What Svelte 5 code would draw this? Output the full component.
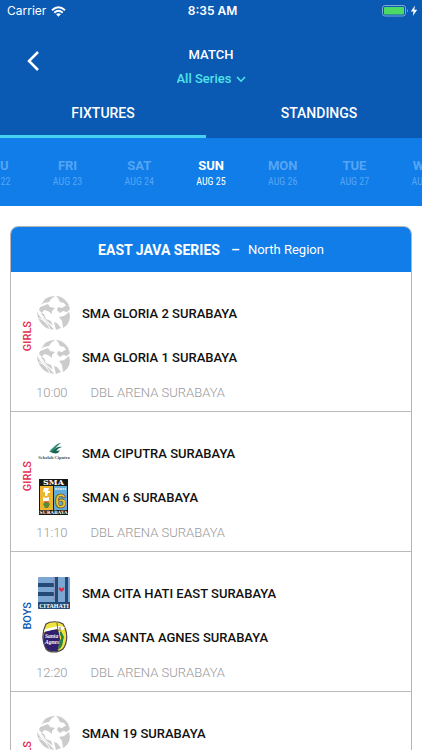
<script>
  const days = [
    { day: 'THU', date: 'AUG 22' },
    { day: 'FRI', date: 'AUG 23' },
    { day: 'SAT', date: 'AUG 24' },
    { day: 'SUN', date: 'AUG 25' },
    { day: 'MON', date: 'AUG 26' },
    { day: 'TUE', date: 'AUG 27' },
    { day: 'WED', date: 'AUG 28' }
  ];
  const matches = [
    { group: 'GIRLS', time: '10:00', venue: 'DBL ARENA SURABAYA', teams: [{ name: 'SMA GLORIA 2 SURABAYA', logo: 'ball' }, { name: 'SMA GLORIA 1 SURABAYA', logo: 'ball' }] },
    { group: 'GIRLS', time: '11:10', venue: 'DBL ARENA SURABAYA', teams: [{ name: 'SMA CIPUTRA SURABAYA', logo: 'ciputra' }, { name: 'SMAN 6 SURABAYA', logo: 'six' }] },
    { group: 'BOYS', time: '12:20', venue: 'DBL ARENA SURABAYA', teams: [{ name: 'SMA CITA HATI EAST SURABAYA', logo: 'citahati' }, { name: 'SMA SANTA AGNES SURABAYA', logo: 'agnes' }] },
    { group: 'GIRLS', time: '13:30', venue: 'DBL ARENA SURABAYA', teams: [{ name: 'SMAN 19 SURABAYA', logo: 'ball' }, { name: 'SMAN 2 SURABAYA', logo: 'ball' }] }
  ];
  let selected = $state('SUN');
  let tab = $state('FIXTURES');
</script>

{#snippet logo(kind)}
  <svg class="logo" viewBox="0 0 36 36" aria-hidden="true">
    {#if kind === 'ball'}
      <g fill="#cbccce">
        <path d="M9 4 C12 2 16 1 19 1 L15 4 L13 7 L8 8 L5 10 Z" />
        <path d="M20 1 C26 1 30 5 33 10 L31 12 L28 8 L24 7 L22 3 Z" />
        <path d="M7 11 L12 9 L14 12 L19 13 L16 16 L16 19 L12 16 L8 15 L6 18 L3 15 L4 12 Z" />
        <path d="M22 12 L26 13 L29 11 L33 11 L34 14 L31 17 L27 16 L24 18 L21 15 Z" />
        <path d="M1 16 C3 22 9 27 14 30 L18 34.500 C9 35 1 27 1 16 Z" />
        <path d="M5 18 L8 19 L10 24 L15 26 L17 31 C11 28 7 24 5 18 Z" />
        <path d="M33 17 C36 25 31 31 27 33 L26 26 L23 22 L28 21 Z" />
        <path d="M18 27 L21 28 L25 33 L20 35 Z" />
      </g>
      <path d="M3 23 C8 25 12 29 14 34 M6 20 C9 25 12 28 17 31" stroke="#fff" stroke-width="1" fill="none" />
    {:else if kind === 'ciputra'}
      <path d="M14 15 C18 13 20 8 25 8 C22 10 19 13 18 17 Z" fill="#2d8b78" />
      <path d="M17 16 C20 12 23 11 26 12 C23 13 21 14 20 17 Z M13 16 C17 15 20 17 24 15 L22 18 C19 19 16 18 13 16 Z" fill="#196552" />
      <text x="18" y="24" font-family="Liberation Serif, serif" font-weight="700" font-size="4.500" text-anchor="middle" fill="#456">Sekolah Ciputra</text>
    {:else if kind === 'six'}
      <rect x="3" y="0" width="29" height="36" fill="#151713" />
      <rect x="4" y="7" width="13" height="24" fill="#edb52d" />
      <rect x="18" y="7" width="13" height="24" fill="#62aad7" />
      <text x="17.500" y="6" font-family="DejaVu Serif, serif" font-weight="700" font-size="8" text-anchor="middle" fill="#fff">SMA</text>
      <text x="24.500" y="29" font-family="Liberation Sans, sans-serif" font-weight="700" font-size="21" text-anchor="middle" fill="#efc62c" stroke="#57431b" stroke-width=".6">6</text>
      <path d="M8 9 H13 L12 12 H14 V14 H12 L11 17 H9 V13 H7 Z M7 18 L10 19 L13 18 V22 H7 Z" fill="#fff" />
      <path d="M19 10 H30" stroke="#e8f1f6" stroke-width="1.500" stroke-dasharray="2 .5" />
      <path d="M7 25 C10 22 12 23 14 25 L12 29 H9 Z" fill="#598c3a" />
      <path d="M8 23 H13" stroke="#c4443b" />
      <text x="17.500" y="35" font-family="DejaVu Serif, serif" font-weight="700" font-size="4.500" text-anchor="middle" fill="#fff">SURABAYA</text>
    {:else if kind === 'citahati'}
      <rect x="2" y="2" width="32" height="32" rx="1" fill="#7ba7d2" />
      <path d="M2 8 H18 V12 H2 Z M2 17 H18 V21 H2 Z M2 27 H34 V33 Q34 34 33 34 H3 Q2 34 2 33 Z M19 2 H22 V27 H19 Z M29 2 H32 V27 H29 Z" fill="#244b75" />
      <path d="M18 2 V26" stroke="#b8637a" stroke-width=".8" stroke-dasharray="2 1" />
      <path d="M25.500 17 C20 13 24 11 25.500 14 C27 11 31 13 25.500 17 Z" fill="#d92d44" />
      <text x="18" y="33" font-family="Liberation Serif, serif" font-weight="700" font-size="6" text-anchor="middle" fill="#fff">CITAHATI</text>
    {:else}
      <path d="M10 5 C14 2 23 2 27 5 C32 13 32 23 27 30 C22 34 14 34 10 30 C6 22 6 13 10 5 Z" fill="#f0e43b" stroke="#4b4650" stroke-width="1.200" />
      <path d="M9 12 L22 10 L24 20 L22 32 C17 33 12 32 10 29 C7 23 7 17 9 12 Z" fill="#30206e" />
      <path d="M9 10 L22 7 L29 8 L27 11 L20 10 L8 13 Z" fill="#fff" />
      <path d="M21 4 L22 12 M24 8 V12" stroke="#514633" stroke-width=".8" />
      <path d="M25 12 C21 15 28 18 24 21 C22 24 24 28 21 31 C28 29 26 23 28 18 Z" fill="#28834b" />
      <g font-family="Liberation Serif, serif" font-style="italic" font-weight="700" font-size="5.500" fill="#fff">
        <text x="9" y="19">Santa</text>
        <text x="9" y="25">Agnes</text>
      </g>
    {/if}
  </svg>
{/snippet}

<div class="screen">
  <header>
    <div class="status">
      <span class="carrier">Carrier
        <svg width="15" height="11" viewBox="0 0 15 11" aria-hidden="true">
          <g fill="none" stroke="#fff" stroke-width="1.900"><path d="M1 4.200 Q7.500 -1.700 14 4.200" /><path d="M3.300 6.700 Q7.500 2.800 11.700 6.700" /></g>
          <path d="M5.100 8.300 Q7.500 6.200 9.900 8.300 L7.500 10.800 Z" fill="#fff" />
        </svg>
      </span>
      <span class="clock">8:35 AM</span>
      <span class="power">
        <svg width="36" height="12" viewBox="0 0 36 12" aria-hidden="true">
          <rect x=".5" y=".5" width="23" height="10.500" rx="2.500" fill="none" stroke="#7da7d8" />
          <rect x="2" y="2" width="20" height="7.500" rx="1" fill="#4cd964" />
          <path d="M25 4 Q27 5.700 25 7.500 Z" fill="#7da7d8" />
          <path d="M33 .5 L28.800 6.500 H31.500 L30.800 11 L35.200 4.800 H32.300 Z" fill="#fff" />
        </svg>
      </span>
    </div>
    <div class="titlebar">
      <button class="back" aria-label="Back">
        <svg width="14" height="22" viewBox="0 0 14 22" aria-hidden="true"><path d="M12 2 L3 11 L12 20" fill="none" stroke="#fff" stroke-width="2.500" /></svg>
      </button>
      <div class="heading">
        <h1>MATCH</h1>
        <div class="series">
          <select aria-label="Series"><option>All Series</option></select>
          <svg width="10" height="7" viewBox="0 0 10 7" aria-hidden="true"><path d="M1 1 L5 5.200 L9 1" fill="none" stroke="#50e3ea" stroke-width="1.600" /></svg>
        </div>
      </div>
    </div>
    <nav class="tabs">
      {#each ['FIXTURES', 'STANDINGS'] as name}
        <button class:active={tab === name} onclick={() => (tab = name)}>{name}</button>
      {/each}
    </nav>
  </header>

  <div class="days">
    {#each days as d}
      <button class:active={selected === d.day} onclick={() => (selected = d.day)}>
        <span class="day">{d.day}</span>
        <span class="date">{d.date}</span>
      </button>
    {/each}
  </div>

  <main>
    <section class="card">
      <h2>EAST JAVA SERIES <span class="dash">–</span> <span class="region">North Region</span></h2>
      {#each matches as m}
        <article>
          <div class="teams">
            <span class="group" class:boys={m.group === 'BOYS'}>{m.group}</span>
            <div class="list">
              {#each m.teams as t}
                <div class="team">{@render logo(t.logo)}<span>{t.name}</span></div>
              {/each}
            </div>
          </div>
          <div class="info"><span>{m.time}</span><span>{m.venue}</span></div>
        </article>
      {/each}
    </section>
  </main>
</div>

<style>
  :global(body) { margin: 0; background: #fff; }
  .screen {
    display: flex;
    flex-direction: column;
    height: 100vh;
    overflow: hidden;
    font-family: Roboto, 'Liberation Sans', sans-serif;
    color: #111;
  }
  button, select { margin: 0; padding: 0; border: 0; background: none; color: inherit; font: inherit; cursor: pointer; }
  svg { display: block; flex: none; }
  header { flex: none; background: #0a59b3; color: #fff; }
  .status {
    display: grid;
    grid-template-columns: 1fr auto 1fr;
    align-items: center;
    height: 22px;
    padding: 0 4px 0 7px;
    font: 12px/22px Inter, sans-serif;
  }
  .carrier { display: flex; align-items: center; gap: 5px; }
  .clock { font-weight: 600; }
  .power { display: flex; justify-content: flex-end; }
  .titlebar {
    display: grid;
    grid-template-columns: 48px 1fr 48px;
    height: 69px;
    padding-top: 1px;
    box-sizing: border-box;
  }
  .back { display: flex; align-items: center; justify-content: flex-end; padding: 0 8px 0 0; height: 76px; }
  .heading { padding-top: 22px; text-align: center; }
  h1 { margin: 0; font-size: 13px; line-height: 20px; font-weight: 500; }
  .series { display: flex; justify-content: center; align-items: center; gap: 4px; margin-top: 4px; color: #50e3ea; }
  .series select { appearance: none; font-size: 13px; line-height: 20px; font-weight: 500; }
  .tabs { display: grid; grid-template-columns: 1fr 1fr; gap: 10px; height: 47px; }
  .tabs button { border-bottom: 3px solid transparent; font-size: 14px; font-weight: 500; }
  .tabs button.active { border-color: #45d2ef; }
  .days {
    flex: none;
    display: flex;
    justify-content: center;
    height: 68px;
    overflow: hidden;
    background: #107de9;
    color: #56a5f4;
  }
  .days button { flex: none; display: flex; flex-direction: column; align-items: center; justify-content: center; width: 17%; padding-top: 3px; }
  .days .active { color: #fff; }
  .day { font-size: 13px; line-height: 16px; font-weight: 700; }
  .date { font-family: 'Roboto Condensed', 'Liberation Sans Narrow', Roboto, sans-serif; font-size: 10px; line-height: 16px; }
  main { flex: 1; min-height: 0; padding: 20px 10px; overflow: hidden; }
  .card { border: 1px solid #b4b6b9; border-radius: 8px; overflow: hidden; }
  h2 {
    display: flex;
    align-items: center;
    justify-content: center;
    gap: 8px;
    height: 45px;
    margin: 0;
    background: #107de9;
    color: #fff;
    font-size: 14px;
    font-weight: 700;
  }
  .dash { padding-left: 3px; font-weight: 500; }
  .region { font-size: 13px; font-weight: 400; }
  article { box-sizing: border-box; height: 140px; padding-top: 19px; border-bottom: 1px solid #bbb; }
  .teams { display: flex; align-items: center; }
  .group { width: 25px; box-sizing: border-box; padding-bottom: 2px; writing-mode: vertical-rl; transform: rotate(180deg); text-align: center; font-size: 11px; line-height: 20px; font-weight: 500; color: #e62c50; }
  .group { padding-right: 7px; }
  .group.boys { color: #0a59b3; }
  .list { flex: 1; }
  .team { display: flex; align-items: center; gap: 10px; height: 44px; font-size: 13px; font-weight: 500; }
  .logo { width: 36px; height: 36px; }
  .info { display: flex; gap: 23px; padding: 4px 0 0 25px; font-size: 13px; line-height: 20px; font-weight: 300; color: #999; }
</style>
